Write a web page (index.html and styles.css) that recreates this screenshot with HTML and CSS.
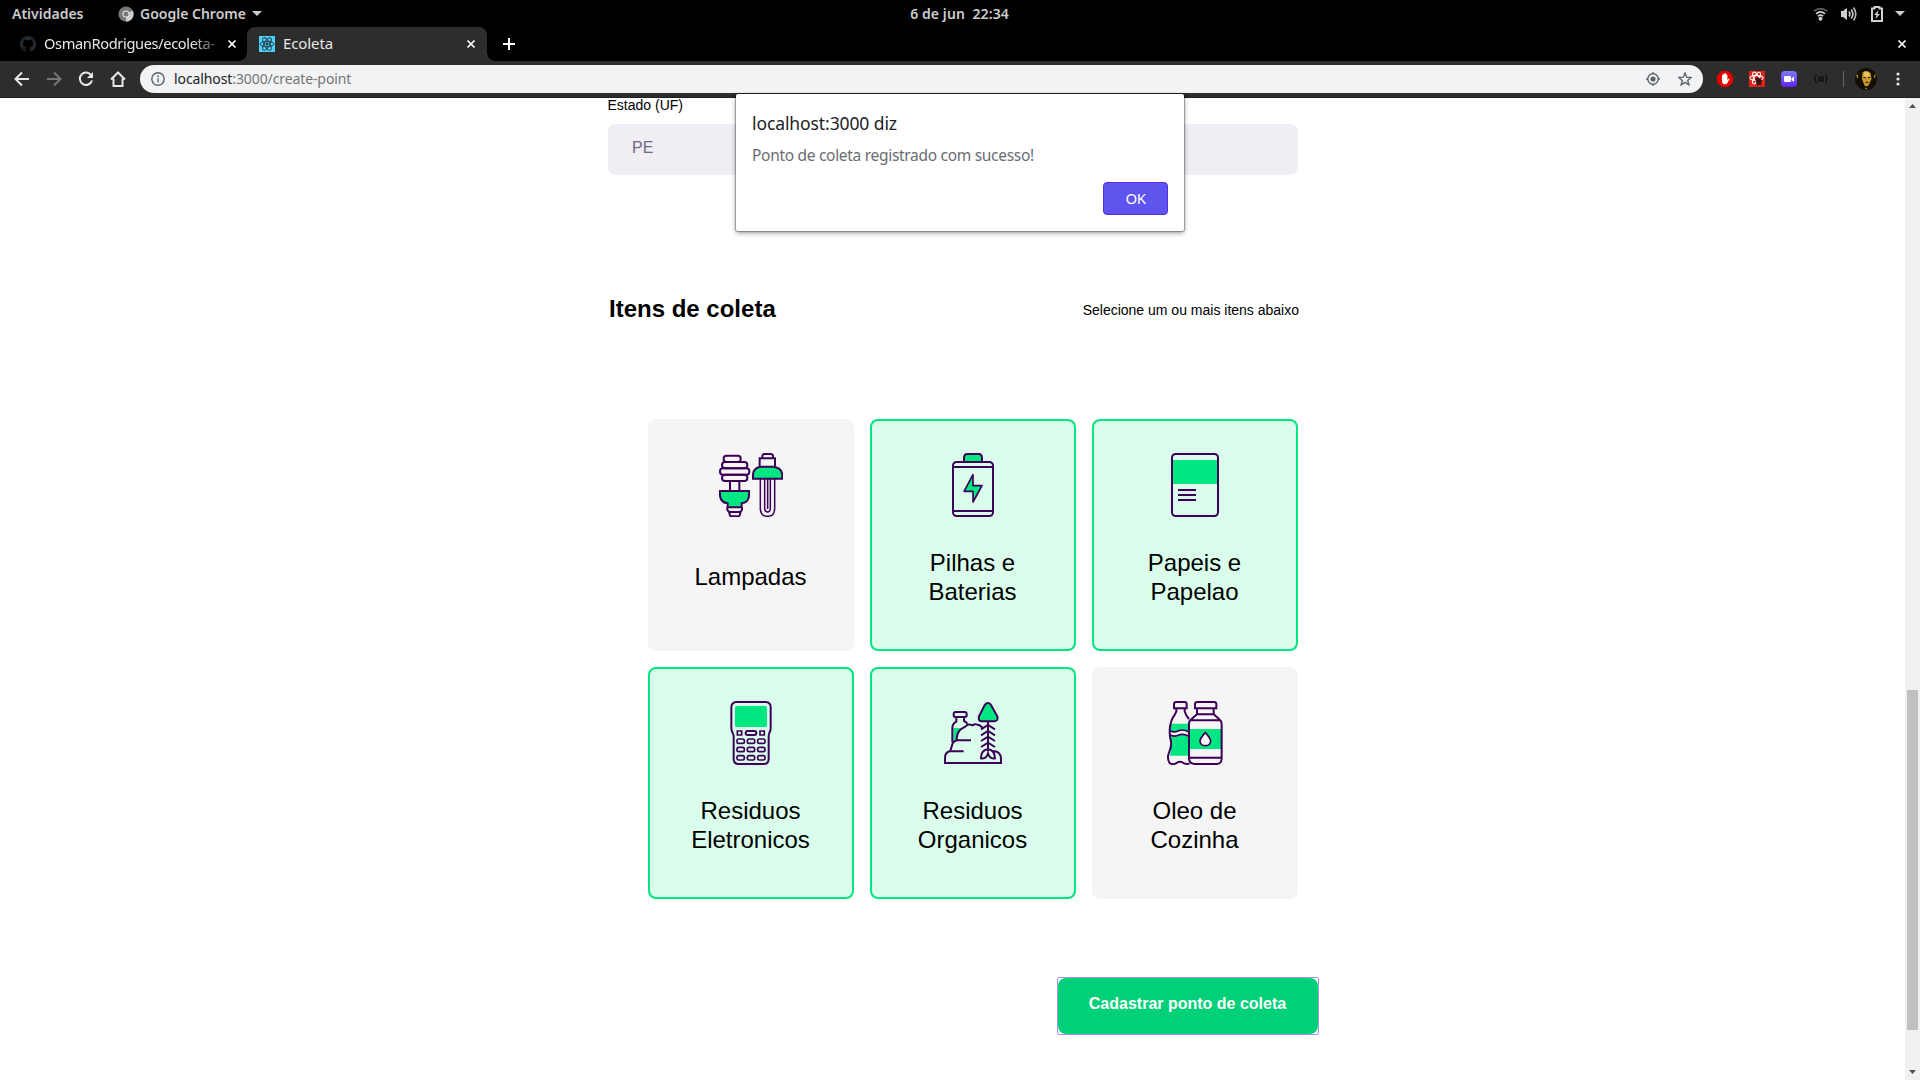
FILE: index.html
```html
<!DOCTYPE html>
<html lang="pt-BR">
<head>
<meta charset="utf-8">
<title>Ecoleta</title>
<link rel="stylesheet" href="styles.css">
</head>
<body>
<header class="system-bar">
  <span class="activities">Atividades</span>
  <span class="app-menu">
    <svg class="app-icon" viewBox="0 0 16 16"><circle cx="8" cy="8" r="7.6" fill="#777"/><path d="M8 8 14.8 4.5A7.6 7.6 0 0 1 8 15.6Z" fill="#ccc"/><circle cx="8" cy="8" r="3.6" fill="#eee"/><circle cx="8" cy="8" r="2.6" fill="#777"/></svg>
    <span class="app-name">Google Chrome</span>
    <svg class="caret" viewBox="0 0 10 5"><path d="M0 0h10L5 5z"/></svg>
  </span>
  <span class="clock">6 de jun&nbsp; 22:34</span>
  <span class="tray">
    <svg width="15" height="14" viewBox="0 0 15 14" fill="none" stroke="#d0d0d0" stroke-width="1.6"><path d="M1 4.2Q7.500-1 14 4.200" stroke="#666"/><path d="M3 6.800Q7.500 3 12 6.800M4.800 9.200Q7.500 7 10.200 9.200"/><circle cx="7.500" cy="11.800" r="1.200" fill="#d0d0d0"/></svg>
    <svg width="16" height="14" viewBox="0 0 16 14" fill="none" stroke="#d0d0d0" stroke-width="1.6"><path d="M0 4h2l4-3v12l-4-3H0z" fill="#d0d0d0" stroke="none"/><path d="M8 4.500q1.800 2.500 0 5M10.200 2.500q3.400 4.500 0 9"/><path d="M12.600.5q4.400 6.500 0 13" stroke="#bbb"/></svg>
    <svg width="12" height="16" viewBox="0 0 12 16"><path d="M1 2.500h2.500V1h5v1.500H11V15H1z" fill="none" stroke="#d0d0d0" stroke-width="2"/><path d="M7.500 4 3 9h2.500L4.500 13 9 8H6.500z" fill="#d0d0d0"/></svg>
    <svg class="caret" viewBox="0 0 10 5"><path d="M0 0h10L5 5z"/></svg>
  </span>
</header>

<div class="tab-strip">
  <div class="tab">
    <svg class="favicon" viewBox="0 0 16 16"><path fill="#24292e" d="M8 0C3.580 0 0 3.580 0 8c0 3.540 2.290 6.530 5.470 7.590.4.070.550-.170.550-.380v-1.490c-2.010.370-2.530-.490-2.690-.940-.090-.230-.480-.940-.820-1.130-.280-.150-.680-.520-.010-.530.630-.010 1.080.580 1.230.820.720 1.210 1.870.870 2.330.660.070-.520.280-.870.510-1.070-1.780-.200-3.640-.890-3.640-3.950 0-.870.310-1.590.820-2.150-.080-.200-.360-1.020.080-2.120 0 0 .670-.210 2.200.820a7.600 7.600 0 0 1 4 0c1.530-1.040 2.200-.820 2.200-.820.440 1.100.160 1.920.080 2.120.510.560.820 1.270.820 2.150 0 3.070-1.870 3.750-3.650 3.950.290.250.540.730.540 1.480v2.200c0 .210.150.460.550.380A8 8 0 0 0 16 8c0-4.420-3.580-8-8-8z"/></svg>
    <span class="tab-title faded">OsmanRodrigues/ecoleta-</span>
    <svg class="close" viewBox="0 0 8 8"><path d="m.5.5 7 7m0-7-7 7"/></svg>
  </div>
  <div class="tab active">
    <svg class="favicon" viewBox="0 0 16 16"><path fill="#4fd0f8" d="M0 0h16v16H0z"/><g fill="none" stroke="#20323c" stroke-width=".9"><ellipse cx="8" cy="8" rx="7" ry="2.700"/><ellipse cx="8" cy="8" rx="7" ry="2.700" transform="rotate(60 8 8)"/><ellipse cx="8" cy="8" rx="7" ry="2.700" transform="rotate(120 8 8)"/></g><circle cx="8" cy="8" r="1.400" fill="#20323c"/></svg>
    <span class="tab-title">Ecoleta</span>
    <svg class="close" viewBox="0 0 8 8"><path d="m.5.5 7 7m0-7-7 7"/></svg>
  </div>
  <svg class="new-tab" viewBox="0 0 12 12"><path d="M6 0v12M0 6h12"/></svg>
  <svg class="close window-close" viewBox="0 0 8 8"><path d="m.5.5 7 7m0-7-7 7"/></svg>
</div>

<nav class="toolbar">
  <div class="nav-buttons">
    <svg viewBox="0 0 16 16"><path d="M15 8H2m6-6.500L1.500 8 8 14.500"/></svg>
    <svg class="disabled" viewBox="0 0 16 16"><path d="M1 8h13M8 1.500 14.500 8 8 14.500"/></svg>
    <svg viewBox="0 0 16 16"><path d="M13.200 4.200A6.200 6.200 0 1 0 14 9.500"/><path d="M15 1v6H9z" fill="#e8e8e8" stroke="none"/></svg>
    <svg viewBox="0 0 16 16"><path d="M3.500 7.500V15h9V7.500M1 8.500l7-7 7 7"/></svg>
  </div>
  <div class="address">
    <svg class="info" viewBox="0 0 14 14"><circle cx="7" cy="7" r="6.200"/><path d="M7 6.200v4.200M7 3.300v1.600"/></svg>
    <span class="url">localhost<span class="path">:3000/create-point</span></span>
    <svg class="locate" viewBox="0 0 14 14"><circle cx="7" cy="7" r="5.200"/><circle cx="7" cy="7" r="2.600" fill="#5f6368" stroke="none"/><path d="M7 0v2m0 10v2M0 7h2m10 0h2"/></svg>
    <svg class="star" viewBox="0 0 14 14"><path d="m7 1 1.700 4.200 4.500.300-3.500 2.900 1.200 4.400L7 10.400l-3.900 2.400 1.200-4.400L.8 5.500l4.500-.3z"/></svg>
  </div>
  <div class="extensions">
    <svg width="16" height="16" viewBox="0 0 16 16"><path d="M4.700 0h6.600L16 4.700v6.600L11.300 16H4.700L0 11.300V4.700z" fill="#e60000"/><path d="M5 7V4.200q.7-.8 1.300 0V3q.7-.8 1.400 0v-.6q.7-.8 1.400 0V4q.7-.8 1.300 0v5l1.300-1.500q1 0 .6.900L10 12.500q-1 1-2.500.8Q5 13 5 10z" fill="#fff"/></svg>
    <svg width="16" height="16" viewBox="0 0 16 16"><path d="M0 0h16v16H0z" fill="#e2231a"/><g fill="none" stroke="#fff" stroke-width="1.100"><ellipse cx="7.500" cy="7" rx="6.500" ry="2.500"/><ellipse cx="7.500" cy="7" rx="6.500" ry="2.500" transform="rotate(60 7.500 7)"/><ellipse cx="7.500" cy="7" rx="6.500" ry="2.500" transform="rotate(120 7.500 7)"/></g><path d="m6 8 3-2 4 3-1 5-4 .5z" fill="#3a1010"/></svg>
    <svg width="16" height="16" viewBox="0 0 16 16"><defs><linearGradient id="cam" x2="0" y2="1"><stop stop-color="#7a7cf8"/><stop offset="1" stop-color="#6022f5"/></linearGradient></defs><rect width="16" height="16" rx="4" fill="url(#cam)"/><rect x="3" y="5" width="7" height="6" rx="1" fill="#fff"/><path d="m10.500 7.500 2.500-2v5.500l-2.500-2z" fill="#fff"/></svg>
    <svg width="16" height="16" viewBox="0 0 16 16" fill="none" stroke="#111" stroke-width="1.300"><path d="M4 4Q2.500 4 2.500 6T1 8q1.500 0 1.500 2T4 12M12 4q1.500 0 1.500 2T15 8q-1.500 0-1.500 2T12 12M5 6h6M5 8h6M5 10h6"/></svg>
    <i class="divider"></i>
    <svg class="avatar" viewBox="0 0 22 22"><circle cx="11" cy="11" r="11" fill="#120e04"/><path d="M7.500 4.500q4-3 8 .500l1 6-3 6.500q-2 1.500-4 0L7 11z" fill="#c79a28"/><path d="M9 4.500q3-2 5.500 1v3l-5 .5z" fill="#e8c463"/><path d="m8.500 9.500 2.500.3M13 9.800l2.300-.3M10.500 14.500l3-.3" stroke="#2a1c04" stroke-width="1.100"/><path d="M1 7l2 1-1 2M21 7l-2 1 1 2M10 20l2 1" stroke="#d8a800" fill="none"/></svg>
    <svg class="more" viewBox="0 0 4 14"><circle cx="2" cy="2" r="1.600"/><circle cx="2" cy="7" r="1.600"/><circle cx="2" cy="12" r="1.600"/></svg>
  </div>
</nav>

<div class="viewport">
  <main class="page">
    <form class="form">
      <label class="label">Estado (UF)</label>
      <div class="select">PE</div>

      <div class="legend">
        <h2>Itens de coleta</h2>
        <span>Selecione um ou mais itens abaixo</span>
      </div>

      <ul class="items">
        <li class="item">
          <svg class="art" viewBox="237 129 192 192">
            <rect x="251" y="137" width="51" height="19" rx="8"/><rect x="246" y="156" width="76" height="19" rx="9"/><rect x="240" y="175" width="88" height="19" rx="9"/><rect x="246" y="194" width="76" height="19" rx="9"/>
            <path d="M270 213v29M298 213v29"/>
            <path class="green" d="M240 243h87v15q-2 20-22 22v12h-42v-12q-20-2-23-22z"/>
            <path d="M262 292v8l5 6h34l5-6v-8M267 306l3 10q2 3 6 3h18q4 0 5-3l3-10"/>
            <path d="M359 169v-24h46v24M367 144v-6q1-6 7-6h18q6 0 7 6v6"/>
            <path class="green" d="M339 206v-13q3-23 26-23h34q25 2 28 23v13z"/>
            <path d="M361 207v91q2 21 22 21t21-21v-91M374 207v90q2 9 9 9t8-9v-90M383 207v90" stroke-width="4.500"/>
          </svg>
          <span>Lampadas</span>
        </li>
        <li class="item selected">
          <svg class="art" viewBox="228 129 192 192">
            <path class="green" d="M297 156v-14q1-10 10-10h34q9 0 10 10v14z"/>
            <rect x="264" y="156" width="120" height="162" rx="11"/>
            <path d="M264 171h120M264 303h120"/>
            <path class="green" stroke-width="5" stroke-linejoin="round" d="M324 194v33h27l-27 49v-32h-27z"/>
          </svg>
          <span>Pilhas e Baterias</span>
        </li>
        <li class="item selected">
          <svg class="art" viewBox="234 129 192 192">
            <path fill="#00e680" stroke="none" d="M261 150h138v72H261z"/>
            <rect x="261" y="132" width="138" height="186" rx="11"/>
            <path d="M279 240h54M279 255h54M279 270h54"/>
          </svg>
          <span>Papeis e Papelao</span>
        </li>
        <li class="item selected">
          <svg class="art" viewBox="237 123 192 192">
            <path d="M289 126h88q15 1 15 15v64q0 7-4 14-2 5-2 11v68q-1 14-14 14h-78q-13-1-13-14v-68q0-6-3-11-4-6-4-14v-64q1-14 15-15z"/>
            <rect x="285" y="138" width="96" height="63" rx="5" fill="#00e680" stroke="none"/>
            <path d="M292 213h13v12h-13zM360 213h13v12h-13z" stroke-width="5"/>
            <rect x="317" y="213" width="32" height="12" rx="6"/>
            <g stroke-width="5"><rect x="291" y="237" width="22" height="13" rx="5"/><rect x="322" y="237" width="22" height="13" rx="5"/><rect x="353" y="237" width="22" height="13" rx="5"/><rect x="291" y="262" width="22" height="13" rx="5"/><rect x="322" y="262" width="22" height="13" rx="5"/><rect x="353" y="262" width="22" height="13" rx="5"/><rect x="291" y="287" width="22" height="13" rx="5"/><rect x="322" y="287" width="22" height="13" rx="5"/><rect x="353" y="287" width="22" height="13" rx="5"/></g>
          </svg>
          <span>Residuos Eletronicos</span>
        </li>
        <li class="item selected">
          <svg class="art" viewBox="228 123 192 192">
            <path fill="#00e680" stroke="none" d="M265 204h21q-12 16-11 37l-10 6z"/>
            <path d="M271 171q-5 0-5-5v-4q0-6 6-6h27q6 0 6 6v4q0 5-5 5zM274 172v13q-12 6-12 20v42M297 172v11q7 2 10 9"/>
            <path d="M354 207q-4-11-16-13-10-3-15 2-11-4-16-1-9 8-17 11-15 10-15 35-13 4-14 16-3 8-5 16-17 4-16 22v14h168v-14q-2-22-25-22M273 241h45M256 274h40"/>
            <path class="green" d="M369 129q6 0 9 6l19 34q4 13-9 15h-39q-11-2-7-15l17-34q4-6 10-6z"/>
            <path d="M369 186v88M348 208l21-13 21 13M348 226l21-13 21 13M348 243l21-13 21 13M348 261l21-13 21 13M369 267q-22 4-21 28 16 3 21-15 5 18 21 15 0-23-21-28"/>
          </svg>
          <span>Residuos Organicos</span>
        </li>
        <li class="item">
          <svg class="art" viewBox="234 123 192 192">
            <path fill="#00e680" stroke="none" d="M259 191h52v96h-56q5-20 2-35-5-35 2-61zM315 207h93v60h-93z"/>
            <path d="M255 213q13 7 24 0 13-7 31 2v15q-18-9-31-2-11 6-24-2z" fill="#f5f5f5" stroke="none"/>
            <path stroke-width="5" d="M254 212q14 7 25 1 16-7 31 2M256 225q13 6 23 1 16-7 31 2"/>
            <path d="M267 145v-12q0-7 7-7h24q7 0 7 7v12zM274 146v8q-4 10-10 18-10 19-10 44 0 15 4 28 2 15-5 31-8 19 0 33 8 7 18 3 9-7 19-5 11 9 24 4M299 146v8q3 12 13 23"/>
            <path d="M330 145v-12q0-7 7-7h50q7 0 7 7v12zM336 147v16l-16 14q-8 5-8 14v106q2 14 16 15h68q13-1 14-15V191q0-8-8-14l-16-14v-16M336 163h50M319 181h85M313 293h96"/>
            <path d="M361 218q15 16 16 25-1 14-16 14t-16-14q1-9 16-25z" fill="#f5f5f5" stroke-width="5"/>
          </svg>
          <span>Oleo de Cozinha</span>
        </li>
      </ul>

      <div class="focus-ring"><button class="submit" type="button">Cadastrar ponto de coleta</button></div>
    </form>
  </main>
  <div class="scrollbar">
    <svg viewBox="0 0 7 4"><path d="M0 4h7L3.500 0z"/></svg>
    <div class="track"><div class="thumb"></div></div>
    <svg viewBox="0 0 7 4"><path d="M0 0h7L3.500 4z"/></svg>
  </div>
</div>

<div class="dialog" role="dialog">
  <h1>localhost:3000 diz</h1>
  <p>Ponto de coleta registrado com sucesso!</p>
  <button class="ok" type="button">OK</button>
</div>
</body>
</html>
```
FILE: styles.css
```css
* { box-sizing: border-box; }
body {
  margin: 0;
  width: 1920px;
  height: 1080px;
  overflow: hidden;
  display: flex;
  flex-direction: column;
  background: #fff;
  font-family: "Noto Sans", sans-serif;
}
svg { display: block; flex: none; }

/* desktop bar */
.system-bar {
  height: 27px;
  flex: none;
  display: grid;
  grid-template-columns: 1fr auto 1fr;
  grid-template-areas: "left clock tray";
  align-items: center;
  background: #000;
  color: #ccc;
  font-size: 14px;
  font-weight: 600;
  white-space: nowrap;
}
.activities { grid-area: left; padding-left: 12px; }
.app-menu { grid-area: left; display: flex; align-items: center; padding-left: 118px; }
.app-icon { width: 16px; height: 16px; margin-right: 6px; }
.caret { width: 10px; height: 5px; fill: #ccc; }
.app-name { margin-right: 6px; }
.clock { grid-area: clock; padding-right: 1px; letter-spacing: .1px; }
.tray { grid-area: tray; display: flex; align-items: center; justify-content: flex-end; gap: 14px; padding-right: 15px; }
.tray svg:nth-child(1) { margin-right: -1px; }
.tray svg:nth-child(3) { margin-right: -2px; }

/* tabs */
.tab-strip { height: 34px; flex: none; display: flex; align-items: center; background: #000; color: #fff; }
.tab { width: 247px; height: 34px; display: flex; align-items: center; padding: 0 11px 0 20px; font-size: 15px; }
.tab.active { position: relative; width: 240px; padding: 0 12px; background: #2d2d2d; border-radius: 8px 8px 0 0; }
.tab.active::before,
.tab.active::after { content: ""; position: absolute; bottom: 0; width: 8px; height: 8px; }
.tab.active::before { left: -8px; background: radial-gradient(circle at 0 0, transparent 7.5px, #2d2d2d 8px); }
.tab.active::after { right: -8px; background: radial-gradient(circle at 100% 0, transparent 7.5px, #2d2d2d 8px); }
.favicon { width: 16px; height: 16px; margin-right: 8px; }
.tab-title { flex: 1; white-space: nowrap; color: #e8e8e8; padding-bottom: 2px; letter-spacing: -.1px; }
.faded { font-size: 14.6px; letter-spacing: -.35px; -webkit-mask-image: linear-gradient(90deg, #000 84%, rgba(0, 0, 0, .2)); mask-image: linear-gradient(90deg, #000 84%, rgba(0, 0, 0, .2)); }
.close { width: 8px; height: 8px; margin: 0 0 0 9px; fill: none; stroke: #fff; stroke-width: 1.7; overflow: visible; }
.active .close { margin-right: 0; }
.new-tab { width: 12px; height: 12px; margin-left: 16px; stroke: #fff; stroke-width: 2; }
.window-close { margin-left: auto; margin-right: 14px; }

/* toolbar */
.toolbar { height: 37px; flex: none; display: flex; align-items: center; background: #2d2d2d; border-bottom: 1px solid #1d1d1d; }
.nav-buttons { width: 140px; display: flex; gap: 16px; padding-left: 14px; }
.nav-buttons svg { width: 16px; height: 16px; fill: none; stroke: #e8e8e8; stroke-width: 2; }
.nav-buttons .disabled { stroke: #777; }
.address { width: 1563px; height: 28px; display: flex; align-items: center; padding: 0 11px; border-radius: 14px; background: #f1f3f4; }
.address svg { width: 14px; height: 14px; fill: none; stroke: #5f6368; stroke-width: 1.4; }
.address .info { margin-right: 9px; }
.url { font-size: 14px; letter-spacing: -.1px; color: #222; flex: 1; padding-bottom: 1px; }
.path { color: #757575; }
.address .star { margin: 0 0 0 18px; }
.extensions { flex: 1; display: flex; align-items: center; padding-left: 14px; gap: 16px; }
.divider { width: 1px; height: 16px; margin: 0 -5px 0 -2px; background: #666; }
.avatar { width: 22px; height: 22px; }
.more { width: 4px; height: 14px; fill: #e8e8e8; margin-left: 3px; }

/* page */
.viewport { flex: 1; min-height: 0; display: flex; }
.page { flex: 1; overflow: hidden; font-family: "Liberation Sans", Arial, sans-serif; color: #000; }
.form { width: 690px; margin-left: 608px; display: flex; flex-direction: column; }
.label { font-size: 14px; line-height: 14px; margin: 0 0 12px -.5px; }
.select { height: 51px; padding: 0 24px; line-height: 48px; font-size: 16px; border-radius: 8px; background: #f0edf5; color: #6c6c80; }
.legend { display: flex; justify-content: space-between; align-items: center; margin: 119px -1px 0 1px; height: 30px; font-size: 14px; }
.legend h2 { margin: 0; font-size: 24px; }
.legend span { padding-top: 2px; }
.items { list-style: none; margin: 95px 0 0; padding: 0 0 0 40px; display: grid; grid-template-columns: repeat(3, 206px); grid-auto-rows: 232px; gap: 16px; }
.item {
  display: flex;
  flex-direction: column;
  align-items: center;
  padding: 32px 24px 16px;
  border: 2px solid #f5f5f5;
  border-radius: 8px;
  background: #f5f5f5;
  text-align: center;
  font-size: 24px;
  line-height: 29px;
}
.item span { flex: 1; display: flex; align-items: center; padding: 0 9px 0 8px; margin-top: 3px; }
.item.selected { background: #dafeeb; border-color: #00e680; }
.art { width: 64px; height: 64px; fill: none; stroke: #3d0057; stroke-width: 6; }
.green { fill: #00e680; }
.focus-ring { align-self: flex-end; display: flex; margin: 78px -21px 0 0; border: 1px solid #a394f6; border-radius: 2px; }
.submit {
  width: 260px;
  height: 56px;
  padding: 0 1px 5px 0;
  border: 0;
  border-radius: 8px;
  background: #00d077;
  color: #fff;
  font: bold 16px "Liberation Sans", Arial, sans-serif;
}
.scrollbar { width: 15px; display: flex; flex-direction: column; align-items: center; justify-content: space-between; padding: 6px 0; background: #f1f1f1; }
.scrollbar svg { width: 7px; height: 4px; fill: #505050; }
.track { flex: 1; width: 11px; padding-top: 582px; }
.thumb { height: 340px; background: #c1c1c1; }

/* alert box floating over the page */
.dialog {
  position: absolute;
  left: 736px;
  top: 94px;
  width: 448px;
  height: 137px;
  display: flex;
  flex-direction: column;
  padding: 16px;
  background: #fff;
  border-radius: 2px;
  box-shadow: 0 0 1px 1px rgba(0, 0, 0, .28), 0 2px 5px rgba(0, 0, 0, .4);
}
.dialog h1 { margin: 0; font-size: 17.5px; letter-spacing: -.1px; line-height: 26px; font-weight: 400; color: #202124; }
.dialog p { margin: 8px 0 0; font-size: 15.5px; letter-spacing: -.3px; line-height: 22px; color: #6a6d72; }
.ok {
  align-self: flex-end;
  width: 65px;
  height: 33px;
  margin-top: 16px;
  padding: 0 0 2px;
  border: 1px solid #5030e0;
  border-radius: 4px;
  background: #5f54ee;
  color: #fff;
  font: 15px "Noto Sans", sans-serif;
  letter-spacing: -.6px;
}
```
